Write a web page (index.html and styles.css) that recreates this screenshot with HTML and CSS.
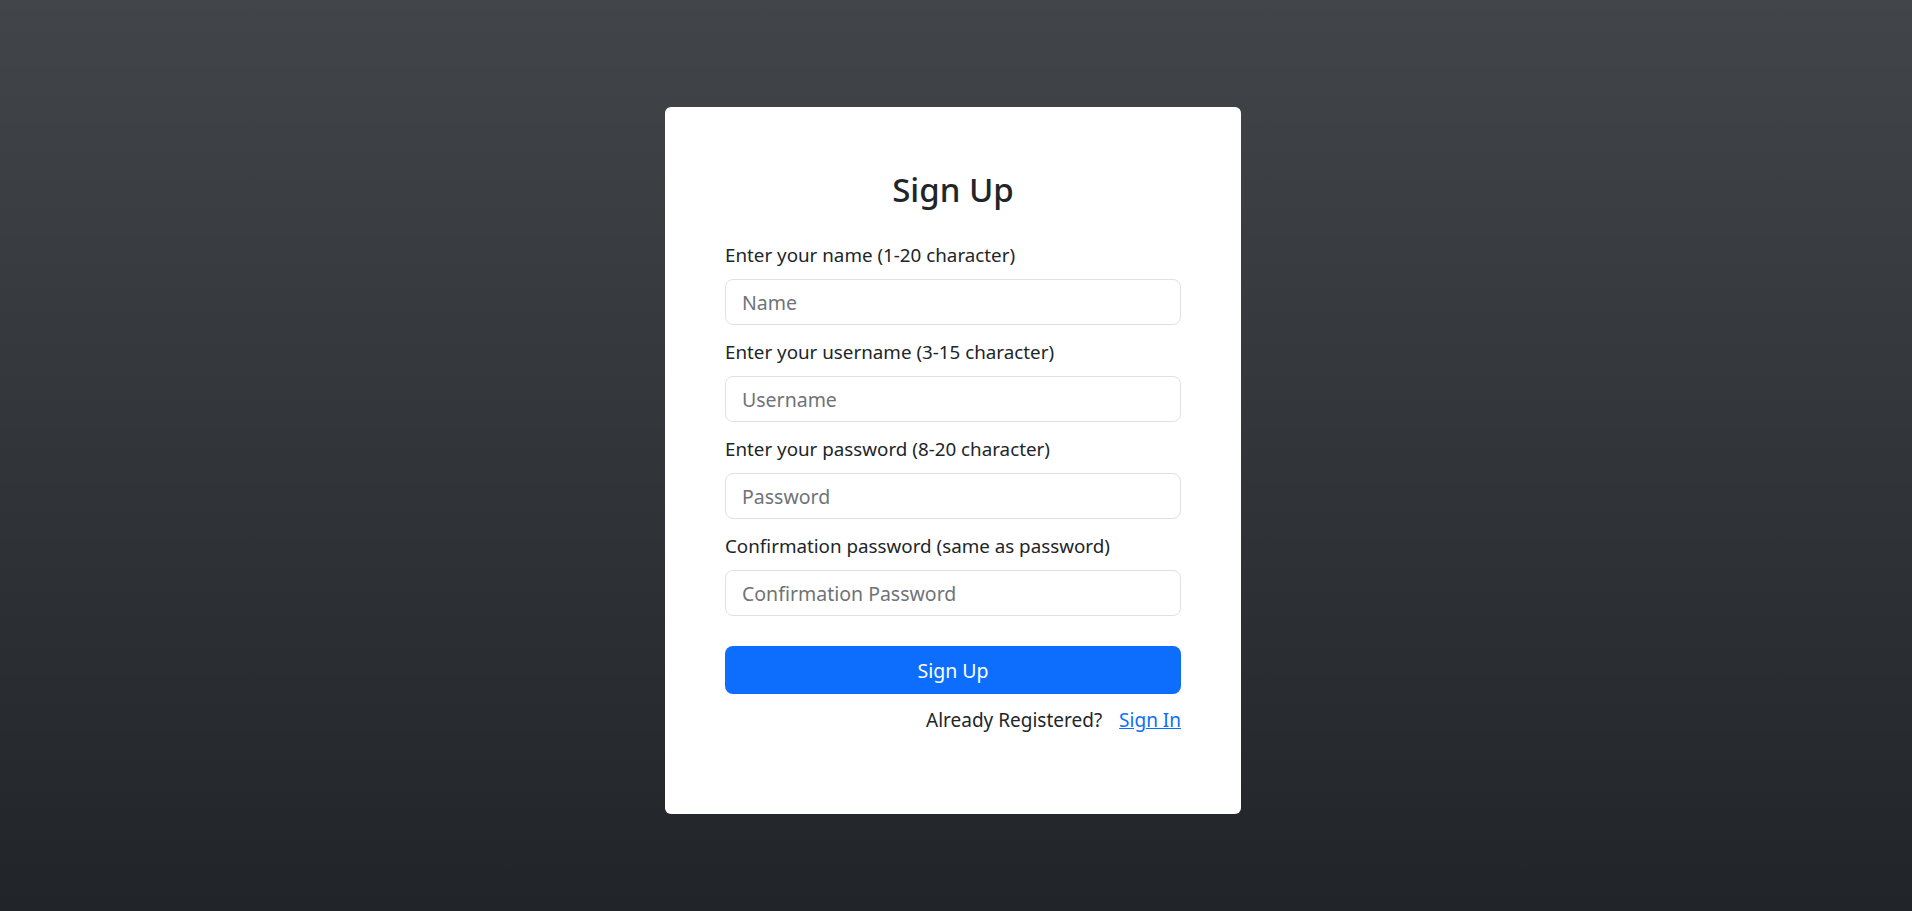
FILE: index.html
```html
<!DOCTYPE html>
<html lang="en">
<head>
<meta charset="utf-8">
<title>Sign Up</title>
<link rel="stylesheet" href="styles.css">
</head>
<body>
<main class="page">
  <section class="card">
    <h2 class="title">Sign Up</h2>
    <form class="form">
      <div class="field">
        <label class="label" for="name">Enter your name (1-20 character)</label>
        <input class="input" id="name" type="text" placeholder="Name">
      </div>
      <div class="field">
        <label class="label" for="username">Enter your username (3-15 character)</label>
        <input class="input" id="username" type="text" placeholder="Username">
      </div>
      <div class="field">
        <label class="label" for="password">Enter your password (8-20 character)</label>
        <input class="input" id="password" type="password" placeholder="Password">
      </div>
      <div class="field">
        <label class="label" for="confirm">Confirmation password (same as password)</label>
        <input class="input" id="confirm" type="password" placeholder="Confirmation Password">
      </div>
      <button class="btn" type="button">Sign Up</button>
      <p class="footer">Already Registered? <a class="link" href="#">Sign In</a></p>
    </form>
  </section>
</main>
</body>
</html>
```
FILE: styles.css
```css
* {
  box-sizing: border-box;
}

html, body {
  margin: 0;
  height: 100%;
}

body {
  font-family: "Noto Sans", "Open Sans", sans-serif;
  color: #212529;
  background-color: #212529;
  background-image: linear-gradient(180deg, rgba(255, 255, 255, 0.15), rgba(255, 255, 255, 0));
  min-height: 911px;
}

.page {
  display: flex;
  justify-content: center;
  padding: 107px 6px 0 0;
}

.card {
  width: 576px;
  height: 707px;
  background: #fff;
  border-radius: 6px;
  padding: 64px 60px 0;
}

.title {
  margin: 0 0 34px;
  font-size: 33px;
  line-height: 38px;
  font-weight: 500;
  text-align: center;
}

.form {
  display: flex;
  flex-direction: column;
}

.field {
  display: flex;
  flex-direction: column;
  margin-bottom: 15px;
}

.label {
  font-size: 18.8px;
  line-height: 24px;
  margin-bottom: 12px;
}

.input {
  height: 46px;
  padding: 0 16px;
  font-family: inherit;
  font-size: 19.5px;
  color: #212529;
  border: 1px solid #dee2e6;
  border-radius: 8px;
  background: #fff;
  outline: none;
}

.input::placeholder {
  color: #6f7377;
}

.btn {
  margin-top: 15px;
  height: 48px;
  border: none;
  border-radius: 8px;
  background: #0d6efd;
  color: #fff;
  font-family: inherit;
  font-size: 19.5px;
  cursor: pointer;
}

.footer {
  margin: 11px 0 0;
  text-align: right;
  font-size: 19px;
  line-height: 30px;
}

.link {
  margin-left: 12px;
  color: #0d6efd;
  text-decoration: underline;
}
```
